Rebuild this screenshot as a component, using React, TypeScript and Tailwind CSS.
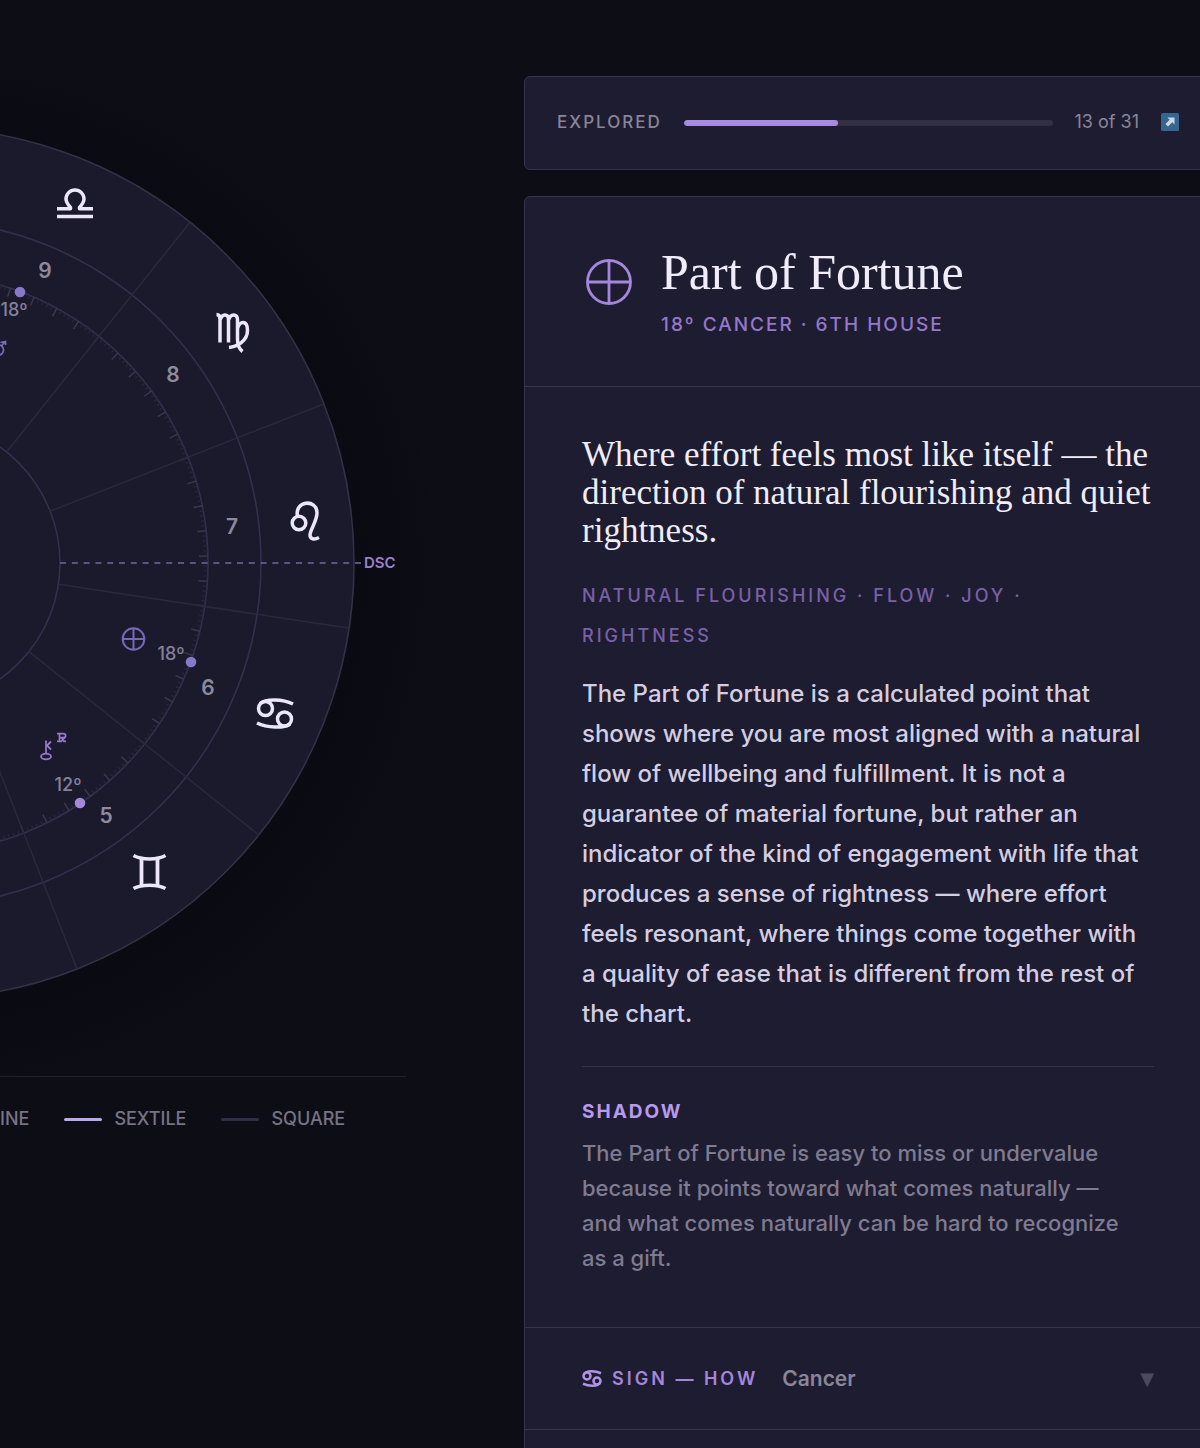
import { useState } from "react"
import type { ReactNode } from "react"

const SANS = "font-[Inter,'Noto_Sans',sans-serif]"
const SERIF = "font-['Liberation_Serif',serif]"

// Wheel geometry, in the units of the svg viewBox
const CX = -82
const CY = 563
const R_OUTER = 436
const R_HOUSE = 343
const R_TICKS = 290
const R_INNER = 142

const CUSPS = [81.4, 51.4, 21.4, -8.6, -38.6, -68.6]

const HOUSES = [
  { label: "9", x: 45, y: 270 },
  { label: "8", x: 173, y: 374 },
  { label: "7", x: 232, y: 526 },
  { label: "6", x: 208, y: 687 },
  { label: "5", x: 106, y: 815 },
]

const POINTS = [
  { degree: "18º", x: 20, y: 292, lx: 14, ly: 309, color: "#8778c8" },
  { degree: "18º", x: 191, y: 662, lx: 171, ly: 653, color: "#8778c8" },
  { degree: "12º", x: 80, y: 803, lx: 68, ly: 784, color: "#a588dc" },
]

const LEGEND = [
  { label: "SEXTILE", swatch: "bg-[#b9a8ea]" },
  { label: "SQUARE", swatch: "bg-[#302d47]" },
]

function polar(radius: number, angle: number) {
  const rad = (angle * Math.PI) / 180
  return { x: CX + radius * Math.cos(rad), y: CY - radius * Math.sin(rad) }
}

function Spoke({ from, to, angle, stroke }: { from: number; to: number; angle: number; stroke: string }) {
  const a = polar(from, angle)
  const b = polar(to, angle)
  return <line x1={a.x} y1={a.y} x2={b.x} y2={b.y} stroke={stroke} strokeWidth="1.5" />
}

function Glyph({ x, y, children }: { x: number; y: number; children: ReactNode }) {
  return (
    <g
      transform={`translate(${x} ${y})`}
      fill="none"
      stroke="#ebe6fa"
      strokeWidth="3.5"
      strokeLinejoin="round"
    >
      {children}
    </g>
  )
}

function FortuneIcon({ className }: { className?: string }) {
  return (
    <svg viewBox="0 0 46 46" className={className} fill="none" stroke="currentColor" strokeWidth="2.8" aria-hidden>
      <circle cx="23" cy="23" r="21.5" />
      <path d="M23 1.5v43M1.5 23h43" />
    </svg>
  )
}

function CancerIcon({ className }: { className?: string }) {
  return (
    <svg viewBox="0 0 40 34" className={className} fill="none" stroke="currentColor" strokeWidth="5" aria-hidden>
      <circle cx="10" cy="12" r="7" />
      <circle cx="30" cy="22" r="7" />
      <path d="M4 8C9 1 25 1 38 6.500M36 26C31 33 15 33 2 27.500" />
    </svg>
  )
}

function ChartWheel() {
  const ticks = []
  for (let i = -30; i < 165; i++) ticks.push(i)

  return (
    <svg viewBox="0 76 406 1000" className="block w-full overflow-visible" role="img" aria-label="Birth chart">
      <defs>
        <radialGradient id="wheel-shadow">
          <stop offset="0.84" stopColor="#06060c" stopOpacity="0.4" />
          <stop offset="1" stopColor="#06060c" stopOpacity="0" />
        </radialGradient>
      </defs>
      <circle cx={CX} cy={CY + 12} r="525" fill="url(#wheel-shadow)" />
      <circle cx={CX} cy={CY} r={R_OUTER} fill="#1b192c" stroke="#343147" strokeWidth="1.6" />
      <g fill="none" stroke="#33304e" strokeWidth="1.6">
        <circle cx={CX} cy={CY} r={R_HOUSE} />
        <circle cx={CX} cy={CY} r={R_TICKS} />
        <circle cx={CX} cy={CY} r={R_INNER} />
      </g>

      {ticks.map((i) => {
        const angle = 81.4 - i
        const major = i % 5 === 0
        return (
          <Spoke
            key={i}
            from={major ? R_TICKS - 9 : R_TICKS - 4}
            to={R_TICKS}
            angle={angle}
            stroke={major ? "#3a374e" : "#282539"}
          />
        )
      })}
      {CUSPS.map((angle) => (
        <Spoke key={angle} from={R_INNER} to={R_OUTER} angle={angle} stroke="#2b283e" />
      ))}

      <line
        x1="60"
        y1={CY}
        x2="361"
        y2={CY}
        stroke="#5d5285"
        strokeWidth="1.8"
        strokeDasharray="6 5.8"
      />
      <text x="364" y="568" fontSize="15" fontWeight="600" fill="#9a80cf">
        DSC
      </text>

      {/* Libra */}
      <Glyph x={75} y={204}>
        <path d="M-18 4.800H-4.500V3.500C-8-.500-9-2.500-9-5a9 9 0 0 1 18 0c0 2.500-1 4.500-4.500 8.500v1.300H18M-18 12.500H18" />
      </Glyph>
      {/* Virgo */}
      <Glyph x={232} y={331}>
        <path d="M-15.500-16.500c2.500 0 3.500 2 3.500 4.500V11.500M-12-11c1-3 2.500-5 5-5s3.500 2 3.500 5V11.500M-3.500-11c1-3 2.500-5 5-5s4 2 4 5V8c0 6 1 9.500 5 12.500" />
        <path d="M5.500-3C7-7 9-8.500 11-8.500c3 0 4.500 3.500 4.500 8C15.500 10 5 15.500-3 16.500" />
      </Glyph>
      {/* Leo */}
      <Glyph x={306} y={520}>
        <circle cx="-7" cy="3" r="6.800" />
        <path d="M-8.500-4C-12-19 11-22 11-7C11 1 4 10 4 15c0 4 4 5 9 2.500" />
      </Glyph>
      {/* Cancer */}
      <Glyph x={275} y={714}>
        <circle cx="-9.500" cy="-5.500" r="7" />
        <circle cx="9.500" cy="5" r="7" />
        <path d="M-15-10.500C-9-15.500 8-15 18-10M15 10C9 14.500-8 14-18 9" />
      </Glyph>
      {/* Gemini */}
      <Glyph x={149.5} y={872}>
        <path d="M-16-16.500C-8-12 8-12 16-16.500M-16 16.500C-8 12 8 12 16 16.500" />
        <path d="M-8-13V13M8-13V13" strokeWidth="3.800" />
      </Glyph>

      <g textAnchor="middle" fontSize="21" fontWeight="600" fill="#8e8a9e">
        {HOUSES.map((h) => (
          <text key={h.label} x={h.x} y={h.y + 8}>
            {h.label}
          </text>
        ))}
      </g>

      {POINTS.map((p) => (
        <g key={`${p.x}-${p.y}`}>
          <circle cx={p.x} cy={p.y} r="5.300" fill={p.color} />
          <text x={p.lx} y={p.ly + 7} textAnchor="middle" fontSize="18" fontWeight="500" fill="#84809a">
            {p.degree}
          </text>
        </g>
      ))}

      {/* Mars, running off the left side */}
      <g fill="none" stroke="#7c6cbd" strokeWidth="1.700">
        <circle cx="-1.500" cy="350" r="5" />
        <path d="M1.500 346L5 341.500M.500 342.500L5.500 341.500V345" />
      </g>

      {/* Part of Fortune */}
      <g fill="none" stroke="#7868b8" strokeWidth="2">
        <circle cx="133.500" cy="639" r="10.800" />
        <path d="M122.700 639h21.600M133.500 628.200v21.600" />
      </g>

      {/* Chiron, retrograde */}
      <g fill="none" stroke="#9678cd" strokeWidth="1.800">
        <ellipse cx="46" cy="756.500" rx="5" ry="2.800" />
        <path d="M46 753.500V740.500M51 741.500L47 745.500L51 749.500" />
      </g>
      <g fill="none" stroke="#9678cd" strokeWidth="1.700">
        <path d="M57 733.700H63C66.500 733.700 66.500 737.700 63 737.700H59.500M59.500 733.700V741.500M57 741.300H62M61.500 737.700L64 741.300H66M61 741.500L65.500 737" />
      </g>
    </svg>
  )
}

function ProgressCard({ done, total }: { done: number; total: number }) {
  return (
    <section className="flex items-start gap-[22px] rounded-md border border-[#37344e] bg-[#1e1c30] px-8 pt-[33px] pb-[35px] text-[#8a869a]">
      <span className="text-[17px] leading-6 font-medium tracking-[2px]">EXPLORED</span>
      <div className="mt-[10px] h-[6px] flex-1 overflow-hidden rounded-full bg-[#322f45]">
        <div className="h-full rounded-full bg-[#a88be0]" style={{ width: `${(done / total) * 100}%` }} />
      </div>
      <span className="text-lg leading-6">
        {done} of {total}
      </span>
      <button type="button" aria-label="Share" className="mt-[3px]">
        <svg viewBox="0 0 18 18" className="size-[18px]" aria-hidden>
          <rect width="18" height="18" rx="1.500" fill="#35668f" />
          <path d="M6.500 4.500h7v7l-2.200-2.200-4.300 4.200-2.500-2.500 4.200-4.300z" fill="#cfd6e2" />
        </svg>
      </button>
    </section>
  )
}

export default function App() {
  const [open, setOpen] = useState(false)

  return (
    <div className={`min-h-screen overflow-hidden bg-[#0d0d16] ${SANS}`}>
      <main className="-mr-3 grid grid-cols-[minmax(0,406fr)_minmax(0,688fr)] gap-x-[118px] pt-[76px]">
        <div>
          <ChartWheel />
          <ul className="flex items-center gap-[35px] border-t border-[#24222f] pt-[30px] text-lg leading-6 font-medium text-[#777385]">
            <li>INE</li>
            {LEGEND.map((item) => (
              <li key={item.label} className="flex items-center gap-3">
                <span className={`h-[3px] w-[38px] rounded-full ${item.swatch}`} />
                {item.label}
              </li>
            ))}
          </ul>
        </div>

        <div className="relative flex flex-col gap-[26px]">
          <ProgressCard done={13} total={31} />

          <article className="-mb-3 rounded-t-md border border-[#37344e] bg-[#1e1c30]">
            <header className="flex items-start gap-[29px] border-b border-[#37344e] px-[57px] pt-[45px] pb-[49px]">
              <FortuneIcon className="mt-[17px] ml-1 size-[46px] text-[#a487db]" />
              <div>
                <h1 className={`${SERIF} text-[50px] leading-[60px] text-[#f0ecfa]`}>Part of Fortune</h1>
                <p className="mt-[11px] text-[19px] leading-6 font-medium tracking-[2px] text-[#9578cb]">
                  18º CANCER · 6TH HOUSE
                </p>
              </div>
            </header>

            <div className="px-[57px] pt-[49px] pb-[51px]">
              <h2 className={`${SERIF} text-[35px] leading-[38px] text-[#f0ecfa]`}>
                Where effort feels most like itself — the direction of natural flourishing and quiet rightness.
              </h2>
              <p className="mt-[26px] text-lg leading-10 font-medium tracking-[3px] text-[#7961a8]">
                NATURAL FLOURISHING · FLOW · JOY · RIGHTNESS
              </p>
              <p className="mt-[18px] text-2xl leading-10 font-medium text-[#d3cee2]">
                The Part of Fortune is a calculated point that shows where you are most aligned with a natural flow of
                wellbeing and fulfillment. It is not a guarantee of material fortune, but rather an indicator of the
                kind of engagement with life that produces a sense of rightness — where effort feels resonant, where
                things come together with a quality of ease that is different from the rest of the chart.
              </p>
              <hr className="mt-8 border-[#35324a]" />
              <h3 className="mt-[33px] text-[19px] leading-6 font-bold tracking-[2px] text-[#b79aee]">SHADOW</h3>
              <p className="mt-3 pr-4 text-[22px] leading-[35px] font-medium text-[#7f7b90]">
                The Part of Fortune is easy to miss or undervalue because it points toward what comes naturally — and
                what comes naturally can be hard to recognize as a gift.
              </p>
            </div>

            <button
              type="button"
              aria-expanded={open}
              onClick={() => setOpen(!open)}
              className="flex h-[103px] w-full items-center border-y border-[#37344e] px-[57px] text-left"
            >
              <CancerIcon className="h-[17px] w-5 text-[#b094e6]" />
              <span className="ml-[10px] text-lg leading-6 font-semibold tracking-[3px] text-[#a487db]">SIGN — HOW</span>
              <span className="ml-6 text-[21px] leading-6 font-semibold text-[#8a869a]">Cancer</span>
              <span className="ml-auto font-['DejaVu_Sans',sans-serif] text-lg leading-6 text-[#4c495d]">▼</span>
            </button>
            <div className="h-8" />
          </article>
        </div>
      </main>
    </div>
  )
}
